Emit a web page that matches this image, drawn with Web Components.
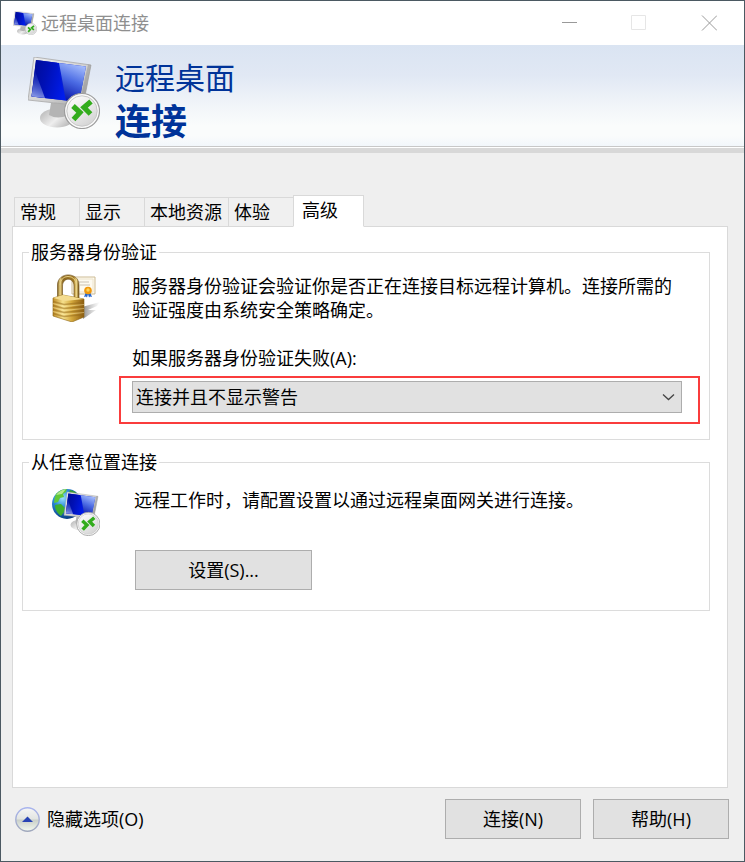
<!DOCTYPE html>
<html lang="zh-CN">
<head>
<meta charset="utf-8">
<title>远程桌面连接</title>
<style>
    body {
        margin: 0;
        font: 18px/24px "Open Sans", "Noto Sans CJK SC", sans-serif;
        color: #000;
    }

    rd-group + rd-group {
        margin-top: 10px;
    }
</style>
</head>
<body>
<rd-window heading="远程桌面连接">
    <rd-banner slot="banner" heading="远程桌面" strong="连接"></rd-banner>

    <rd-tabs labels="常规,显示,本地资源,体验,高级" selected="4">
        <rd-group label="服务器身份验证" icon="lock">
            <rd-text>服务器身份验证会验证你是否正在连接目标远程计算机。连接所需的验证强度由系统安全策略确定。</rd-text>
            <rd-select label="如果服务器身份验证失败(A):" options="连接并且不显示警告,警告我,不连接" marked></rd-select>
        </rd-group>
        <rd-group label="从任意位置连接" icon="gateway" roomy>
            <rd-text>远程工作时，请配置设置以通过远程桌面网关进行连接。</rd-text>
            <rd-button wide>设置(S)...</rd-button>
        </rd-group>
    </rd-tabs>

    <rd-toggle slot="options">隐藏选项(O)</rd-toggle>
    <rd-button slot="actions">连接(N)</rd-button>
    <rd-button slot="actions">帮助(H)</rd-button>
</rd-window>

<script>
const MONITOR = `
    <ellipse cx="29" cy="61" rx="17" ry="9.500" fill="url(#stand)"/>
    <path d="M23 46h14l3 12q-10 5-19 0z" fill="#b4b4b4"/>
    <path d="M6 0L63 8L55 49L0 43z" fill="url(#frame)" stroke="#a8a8a8" stroke-width=".8"/>
    <path d="M60 7.600L63 8L55 49L51 48.500z" fill="#969696" opacity=".55"/>
    <path d="M8 3L58 9.500L51 45L3.500 39.500z" fill="url(#screen)"/>
    <path d="M8 3L29 5.700L38 43.500L3.500 39.500z" fill="url(#glare)"/>
    <path d="M31 6L58 9.500L51 45L38 43.500z" fill="url(#sheen)"/>
    <path d="M7 14L17 41L3.500 39.500z" fill="url(#corner)"/>`;

const BADGE = `
    <circle cx="54" cy="54" r="17.500" fill="#fafafa" stroke="#9c9c9c" stroke-width="1.200"/>
    <circle cx="54" cy="54" r="15.200" fill="url(#disc)" stroke="#c8c8c8"/>
    <path d="M45 49L52 55.500L45.500 62.500M63 44.500L56 50.500L62.500 57" fill="none" stroke="#32ac1c" stroke-width="5.200"/>`;

const DEFS = `
    <defs>
        <linearGradient id="frame" x2="1" y2="1">
            <stop stop-color="#f0f0f0"/><stop offset=".6" stop-color="#cfcfcf"/><stop offset="1" stop-color="#9c9c9c"/>
        </linearGradient>
        <linearGradient id="screen" x2="1" y2=".4">
            <stop stop-color="#0012a0"/><stop offset=".45" stop-color="#0018d8"/><stop offset="1" stop-color="#1830c8"/>
        </linearGradient>
        <linearGradient id="glare" y1=".3" x2="1" y2=".6">
            <stop stop-color="#000c98"/><stop offset=".4" stop-color="#0010b4"/><stop offset="1" stop-color="#001cec"/>
        </linearGradient>
        <linearGradient id="corner" x1=".5" x2=".3" y2="1">
            <stop stop-color="#2038c0" stop-opacity=".2"/><stop offset="1" stop-color="#8c9ce8"/>
        </linearGradient>
        <linearGradient id="sheen" x1=".6" x2=".3" y2="1">
            <stop stop-color="#a4bcfc"/><stop offset=".45" stop-color="#4c6ce4"/><stop offset="1" stop-color="#0410a4"/>
        </linearGradient>
        <linearGradient id="stand" x2="1" y2=".6">
            <stop stop-color="#b0b0b0"/><stop offset=".6" stop-color="#eee"/><stop offset="1" stop-color="#bbb"/>
        </linearGradient>
        <linearGradient id="disc" x2=".7" y2="1">
            <stop stop-color="#fff"/><stop offset=".6" stop-color="#e8e8e8"/><stop offset="1" stop-color="#d4d4d4"/>
        </linearGradient>
        <radialGradient id="globe" cx=".35" cy=".3" r=".75">
            <stop stop-color="#9ae0ff"/><stop offset=".4" stop-color="#2c8ad8"/><stop offset="1" stop-color="#06367c"/>
        </radialGradient>
        <linearGradient id="gold" x2="1" y2="0">
            <stop stop-color="#c08c24"/><stop offset=".32" stop-color="#f6e08c"/><stop offset=".6" stop-color="#d4a83c"/><stop offset="1" stop-color="#8c5c10"/>
        </linearGradient>
        <linearGradient id="shackle" x2="1" y2="0">
            <stop stop-color="#7c5c18"/><stop offset=".12" stop-color="#ecd488"/><stop offset=".25" stop-color="#8c6820"/><stop offset=".75" stop-color="#a07824"/><stop offset=".88" stop-color="#f0d888"/><stop offset="1" stop-color="#6c4c10"/>
        </linearGradient>
        <linearGradient id="shade" x2="1" y2="0">
            <stop stop-color="#555" stop-opacity=".7"/><stop offset="1" stop-color="#999" stop-opacity="0"/>
        </linearGradient>
    </defs>`;

const ICONS = {
    desktop: `<svg viewBox="0 0 72 72">${DEFS}${MONITOR}${BADGE}</svg>`,

    gateway: `
        <svg viewBox="0 0 48 48">${DEFS}
            <circle cx="15" cy="16" r="15" fill="url(#globe)"/>
            <path d="M4 6q5-5 11-5l-1 3-3 2 1 3-4 1-2 4-4 1q0-5 2-9z" fill="#62c838"/>
            <path d="M3 17l6-1 4 4-1 4-3 4q-6-4-6-11z" fill="#3eb02c"/>
            <path d="M18 2q6 1 9 6l-6-1-4-2z" fill="#3c9c34"/>
            <path d="M4 7q4-5 10-6l-4 5z" fill="#d4f4b0" opacity=".7"/>
            <g transform="translate(12 4) scale(.54)">${MONITOR}</g>
            <g transform="translate(.4 .1) scale(.665)">${BADGE}</g>
        </svg>`,

    lock: `
        <svg viewBox="0 0 48 48">${DEFS}
            <path d="M30 33L48 28L45 32L36 36L44 36L31 45z" fill="url(#shade)"/>
            <path d="M20 3h23v17H20z" fill="#fdfaf0" stroke="#cdbb94"/>
            <path d="M22 5h19v13H22z" fill="none" stroke="#eee4cc"/>
            <path d="M27 8h10M28 11h10" stroke="#bcb4a4" stroke-width=".8"/>
            <path d="M34 18l-2 5 2-.5 1 1 1.500-5zM38 18l2 5-2-.5-1 1-1.500-5z" fill="#2868d0"/>
            <circle cx="36" cy="16.500" r="3.800" fill="#f0980c"/>
            <circle cx="36" cy="16" r="1.700" fill="#ffd458"/>
            <path d="M5.500 24V11C5.500-2.500 27 -2.500 27 11V26H22V12C22 3 10.500 3 10.500 12V24z" fill="url(#shackle)" stroke="#6c4c14" stroke-width=".6"/>
            <path d="M8 11q1-8.500 8-8.500t8.500 8" fill="none" stroke="#e8d084"/>
            <path d="M1 24L11 21L32 25V43L20 48L1 42z" fill="url(#gold)" stroke="#8c6414" stroke-width=".6"/>
            <path d="M1 24L11 21L32 25L13 27z" fill="#f4dc90"/>
            <path d="M1 27.500L12 30.500L32 28.500M1 31.500L12 34.500L32 32.500M1 35.500L12 38.500L32 36.500M1 39.500L12 42.500L32 40.500" fill="none" stroke="#94671a" stroke-width="1.300" opacity=".5"/>
            <path d="M1 29.500L12 32.500L32 30.500M1 33.500L12 36.500L32 34.500M1 37.500L12 40.500L32 38.500" fill="none" stroke="#fff0b0" stroke-width=".9" opacity=".5"/>
        </svg>`
};

class RdIcon extends HTMLElement {
    connectedCallback() {
        this.attachShadow({ mode: 'open' }).innerHTML = `
            <style>
                :host {
                    display: block;
                    flex: none;
                    width: var(--icon-size, 48px);
                    height: var(--icon-size, 48px);
                }
                svg { display: block; width: 100%; height: 100%; }
            </style>
            ${ICONS[this.getAttribute('name')]}
        `;
    }
}

/**
 * Window frame: title bar, banner, page body and footer
 */
class RdWindow extends HTMLElement {
    connectedCallback() {
        this.attachShadow({ mode: 'open' }).innerHTML = `
            <style>
                :host {
                    display: flex;
                    flex-direction: column;
                    box-sizing: border-box;
                    min-height: 100vh;
                    border: 1px solid #4b5962;
                    background: #efefef;
                }
                header {
                    display: flex;
                    align-items: center;
                    height: 44px;
                    padding-left: 12px;
                    background: #fff;
                    color: #8f8f8f;
                }
                rd-icon { --icon-size: 24px; }
                h1 {
                    flex: 1;
                    margin: 0 0 0 4px;
                    font-size: 18px;
                    font-weight: 400;
                }
                header button {
                    display: grid;
                    place-items: center;
                    width: 70px;
                    height: 44px;
                    padding: 0;
                    border: 0;
                    background: none;
                    color: #999;
                }
                header button:disabled { color: #e6e6e6; }
                header svg { fill: none; stroke: currentColor; }
                main {
                    display: flex;
                    flex: 1;
                    padding: 42px 16px 0 11px;
                }
                footer {
                    display: flex;
                    align-items: center;
                    gap: 12px;
                    padding: 11px 15px 22px 14px;
                }
                slot[name="options"] { display: block; flex: 1; }
            </style>
            <header>
                <rd-icon name="desktop"></rd-icon>
                <h1>${this.getAttribute('heading')}</h1>
                <button aria-label="最小化"><svg width="16" height="16"><path d="M1 7.500h15"/></svg></button>
                <button aria-label="最大化" disabled><svg width="16" height="16"><path d="M.5.5h14v14H.5z"/></svg></button>
                <button aria-label="关闭"><svg width="16" height="16"><path d="M1 .5l15 15M16 .5l-15 15"/></svg></button>
            </header>
            <slot name="banner"></slot>
            <main><slot></slot></main>
            <footer>
                <slot name="options"></slot>
                <slot name="actions"></slot>
            </footer>
        `;
    }
}

class RdBanner extends HTMLElement {
    connectedCallback() {
        this.attachShadow({ mode: 'open' }).innerHTML = `
            <style>
                :host {
                    display: block;
                    border-bottom: 5px solid #d8d8d8;
                    background: #fff;
                    color: #003399;
                }
                .area {
                    display: flex;
                    gap: 15px;
                    height: 101px;
                    margin-bottom: 1px;
                    padding-left: 27px;
                    border-bottom: 1px solid #c8c8c8;
                    background: linear-gradient(#dae4f2, #e1e8f4 30%, #f1f5f9 60%, #fafcfc 80%, #fafcfc 90%, #f2f7fb);
                }
                rd-icon { --icon-size: 72px; margin-top: 12px; }
                h2 {
                    margin: 11px 0 0;
                    font-size: 30px;
                    font-weight: 400;
                    line-height: 44px;
                }
                strong { display: block; font-size: 36px; }
            </style>
            <div class="area">
                <rd-icon name="desktop"></rd-icon>
                <h2>${this.getAttribute('heading')}<strong>${this.getAttribute('strong')}</strong></h2>
            </div>
        `;
    }
}

class RdTabs extends HTMLElement {
    connectedCallback() {
        const selected = Number(this.getAttribute('selected'));
        const tabs = this.getAttribute('labels').split(',').map((label, i) =>
            `<button role="tab" aria-selected="${i === selected}">${label}</button>`
        ).join('');

        this.attachShadow({ mode: 'open' }).innerHTML = `
            <style>
                :host { display: flex; flex: 1; flex-direction: column; }
                /* overlaps the panel border so the open tab joins the panel */
                .tabs {
                    display: flex;
                    align-items: flex-end;
                    position: relative;
                    height: 32px;
                    margin-bottom: -1px;
                    padding-left: 2px;
                }
                button {
                    box-sizing: border-box;
                    min-width: 65px;
                    height: 30px;
                    padding: 0 6px 0 5px;
                    border: 1px solid #d9d9d9;
                    border-right: 0;
                    background: #f0f0f0;
                    color: inherit;
                    font: inherit;
                    text-align: left;
                }
                button[aria-selected="true"] {
                    min-width: 71px;
                    height: 32px;
                    padding: 0 8px 2px;
                    border-right: 1px solid #d9d9d9;
                    border-bottom-color: #fff;
                    background: #fff;
                }
                .panel {
                    flex: 1;
                    padding: 13px 17px 20px 9px;
                    border: 1px solid #d9d9d9;
                    background: #fff;
                }
            </style>
            <div class="tabs" role="tablist">${tabs}</div>
            <div class="panel" role="tabpanel"><slot></slot></div>
        `;
    }
}

class RdGroup extends HTMLElement {
    connectedCallback() {
        this.attachShadow({ mode: 'open' }).innerHTML = `
            <style>
                :host { display: block; }
                fieldset {
                    min-width: 0;
                    margin: 0;
                    padding: 0 27px 26px 6px;
                    border: 1px solid #dcdcdc;
                }
                legend { padding: 0 2px; }
                .row {
                    display: flex;
                    gap: 32px;
                    padding: 10px 0 0 23px;
                }
                :host([roomy]) fieldset { padding-bottom: 20px; }
                :host([roomy]) .row { gap: 34px; padding-top: 14px; }
                .content { flex: 1; min-width: 0; }
            </style>
            <fieldset>
                <legend>${this.getAttribute('label')}</legend>
                <div class="row">
                    <rd-icon name="${this.getAttribute('icon')}"></rd-icon>
                    <div class="content"><slot></slot></div>
                </div>
            </fieldset>
        `;
    }
}

class RdText extends HTMLElement {
    connectedCallback() {
        this.attachShadow({ mode: 'open' }).innerHTML = `
            <style>
                :host { display: block; }
                p { margin: 0; }
            </style>
            <p><slot></slot></p>
        `;
    }
}

class RdSelect extends HTMLElement {
    connectedCallback() {
        const options = this.getAttribute('options').split(',')
            .map(option => `<option>${option}</option>`).join('');

        this.attachShadow({ mode: 'open' }).innerHTML = `
            <style>
                :host { display: block; margin-top: 24px; }
                label { display: block; margin-bottom: 11px; }
                .field { display: grid; align-items: center; position: relative; }
                select, svg { grid-area: 1 / 1; }
                select {
                    appearance: none;
                    box-sizing: border-box;
                    width: 100%;
                    height: 32px;
                    padding: 0 32px 0 3px;
                    border: 1px solid #adadad;
                    border-radius: 0;
                    background: #e1e1e1;
                    color: inherit;
                    font: inherit;
                }
                svg {
                    justify-self: end;
                    margin-right: 7px;
                    fill: none;
                    stroke: #444;
                    stroke-width: 1.3;
                    pointer-events: none;
                }
                /* highlight frame lying over the field */
                :host([marked]) .field::after {
                    content: "";
                    position: absolute;
                    inset: -5px -18px -11px -13px;
                    border: 2px solid #fa3c3c;
                    pointer-events: none;
                }
            </style>
            <label for="choice">${this.getAttribute('label')}</label>
            <div class="field">
                <select id="choice">${options}</select>
                <svg width="13" height="8"><path d="M1 1.500L6.500 6.500L12 1.500"/></svg>
            </div>
        `;
    }
}

class RdButton extends HTMLElement {
    connectedCallback() {
        this.attachShadow({ mode: 'open' }).innerHTML = `
            <style>
                :host { display: block; }
                :host([wide]) { margin: 38px 0 0 1px; }
                button {
                    box-sizing: border-box;
                    min-width: 136px;
                    height: 40px;
                    padding: 0 12px;
                    border: 1px solid #adadad;
                    background: #e1e1e1;
                    color: inherit;
                    font: inherit;
                }
                :host([wide]) button { min-width: 177px; }
            </style>
            <button><slot></slot></button>
        `;
    }
}

class RdToggle extends HTMLElement {
    connectedCallback() {
        this.attachShadow({ mode: 'open' }).innerHTML = `
            <style>
                :host { display: block; }
                button {
                    display: flex;
                    align-items: center;
                    gap: 7px;
                    padding: 0;
                    border: 0;
                    background: none;
                    color: inherit;
                    font: inherit;
                }
            </style>
            <button aria-expanded="true">
                <svg width="25" height="25" viewBox="0 0 25 25">
                    <defs>
                        <linearGradient id="face" x2="0" y2="1">
                            <stop stop-color="#f6f6f6"/><stop offset=".48" stop-color="#e2e5e2"/>
                            <stop offset=".52" stop-color="#c9cfc9"/><stop offset="1" stop-color="#f4faf0"/>
                        </linearGradient>
                        <linearGradient id="rim" x2="0" y2="1">
                            <stop stop-color="#a8b4ee"/><stop offset="1" stop-color="#a0a8bc"/>
                        </linearGradient>
                    </defs>
                    <circle cx="12.500" cy="12.500" r="11.700" fill="url(#face)" stroke="url(#rim)" stroke-width="1.400"/>
                    <path d="M7 15L12.500 9.500L18 15z" fill="#2844b4"/>
                </svg>
                <span><slot></slot></span>
            </button>
        `;
    }
}

customElements.define('rd-icon', RdIcon);
customElements.define('rd-window', RdWindow);
customElements.define('rd-banner', RdBanner);
customElements.define('rd-tabs', RdTabs);
customElements.define('rd-group', RdGroup);
customElements.define('rd-text', RdText);
customElements.define('rd-select', RdSelect);
customElements.define('rd-button', RdButton);
customElements.define('rd-toggle', RdToggle);
</script>
</body>
</html>
